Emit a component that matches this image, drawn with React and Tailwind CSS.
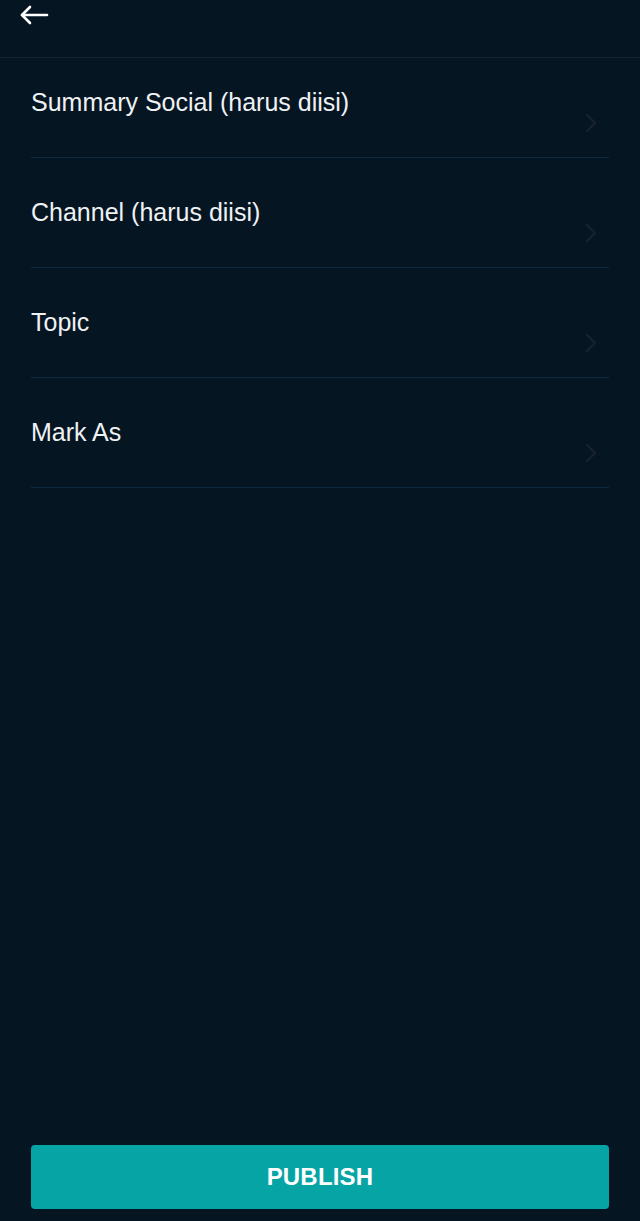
import React from 'react';

const fields = ['Summary Social (harus diisi)', 'Channel (harus diisi)', 'Topic', 'Mark As'];

const BackIcon = () => (
  <svg width="30" height="22" viewBox="0 0 30 22" fill="none" stroke="white" strokeWidth="2.6" strokeLinecap="round" strokeLinejoin="round">
    <path d="M28 11H3" />
    <path d="M11 3L3 11l8 8" />
  </svg>
);

const Chevron = () => (
  <svg width="14" height="20" viewBox="0 0 14 20" fill="none" stroke="#18222b" strokeWidth="2.4" strokeLinecap="round" strokeLinejoin="round">
    <path d="M3 2l8 8-8 8" />
  </svg>
);

const App = () => {
  return (
    <div className="min-h-screen h-[1221px] flex flex-col bg-[#061522] font-['Liberation_Sans',Arial,sans-serif]">
      <header className="h-[58px] shrink-0 flex items-start pt-[4px] pl-[19px] border-b border-[#13222e]">
        <button className="p-0 bg-transparent">
          <BackIcon />
        </button>
      </header>

      <main className="flex-1 flex flex-col px-[31px]">
        {fields.map((label) => (
          <div key={label} className="h-[100px] mb-[10px] flex justify-between border-b border-[#0f2a40]">
            <span className="pt-[29px] text-[25px] leading-[30px] text-[#eef2f4]">{label}</span>
            <span className="pt-[55px] pr-[11px]">
              <Chevron />
            </span>
          </div>
        ))}
      </main>

      <footer className="px-[31px] pb-[12px]">
        <button className="w-full h-[64px] rounded-[4px] bg-[#06a4a4] text-white text-[24px] font-bold tracking-[0.2px]">
          PUBLISH
        </button>
      </footer>
    </div>
  );
};

export default App;
